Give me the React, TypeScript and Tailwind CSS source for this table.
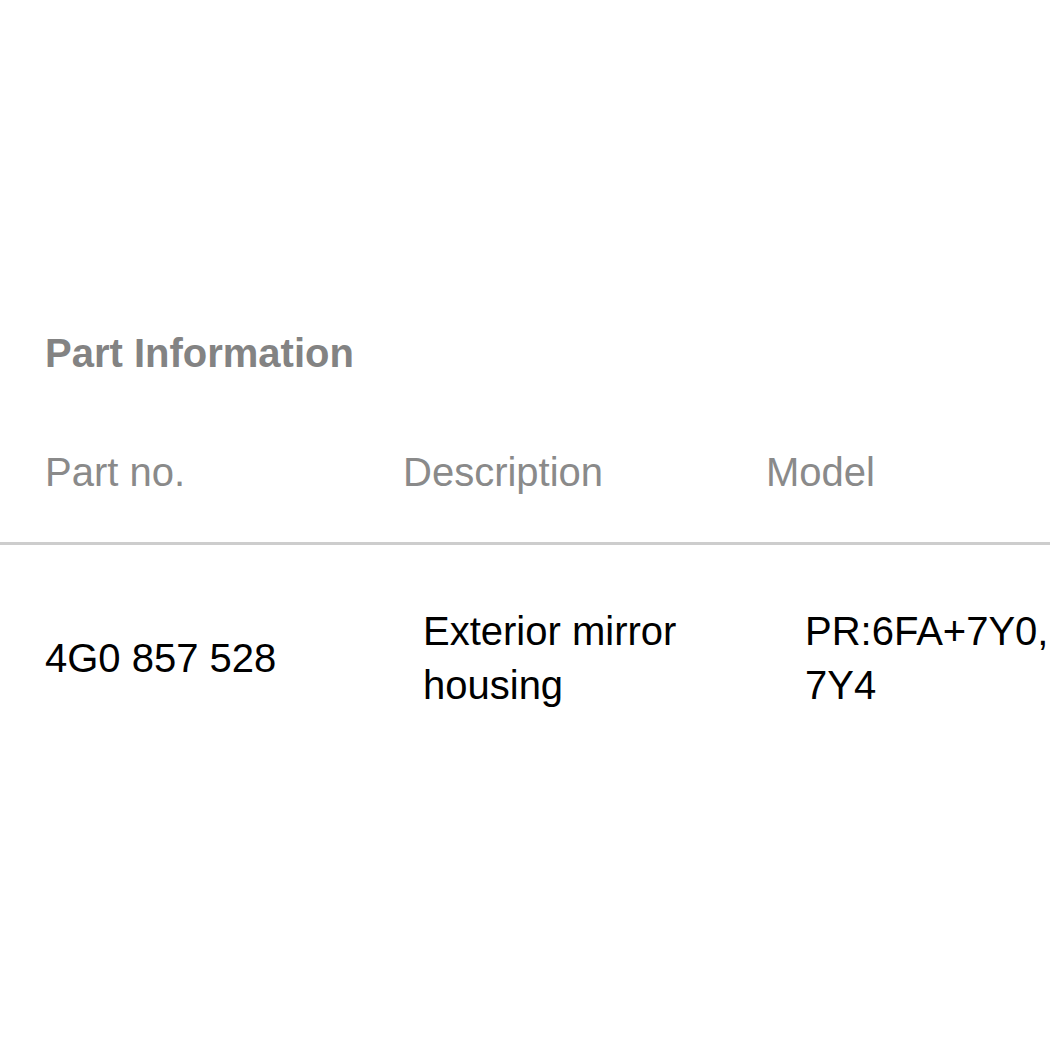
export default function App() {
  return (
    <div
      className="w-[1050px] h-[1050px] bg-white overflow-hidden pt-[329px]"
      style={{ fontFamily: '"Liberation Sans", Arial, sans-serif' }}
    >
      {/* Title */}
      <div className="pl-[45px] text-[40px] leading-[48px] font-bold text-[#838383]">
        Part Information
      </div>

      {/* Table head */}
      <div className="mt-[71px] pb-[46px] flex text-[40px] leading-[48px] text-[#8a8a8a]">
        <div className="w-[403px] pl-[45px]">Part no.</div>
        <div className="w-[363px]">Description</div>
        <div className="flex-1">Model</div>
      </div>
      <div className="h-[3px] w-full bg-[#cdcdcd]" />

      {/* Table row */}
      <div className="mt-[59px] flex items-center text-[40px] leading-[54px] text-black">
        <div className="w-[423px] pl-[45px]">4G0 857 528</div>
        <div className="w-[382px]">
          Exterior mirror
          <br />
          housing
        </div>
        <div className="flex-1 whitespace-nowrap">
          PR:6FA+7Y0,
          <br />
          7Y4
        </div>
      </div>
    </div>
  );
}
